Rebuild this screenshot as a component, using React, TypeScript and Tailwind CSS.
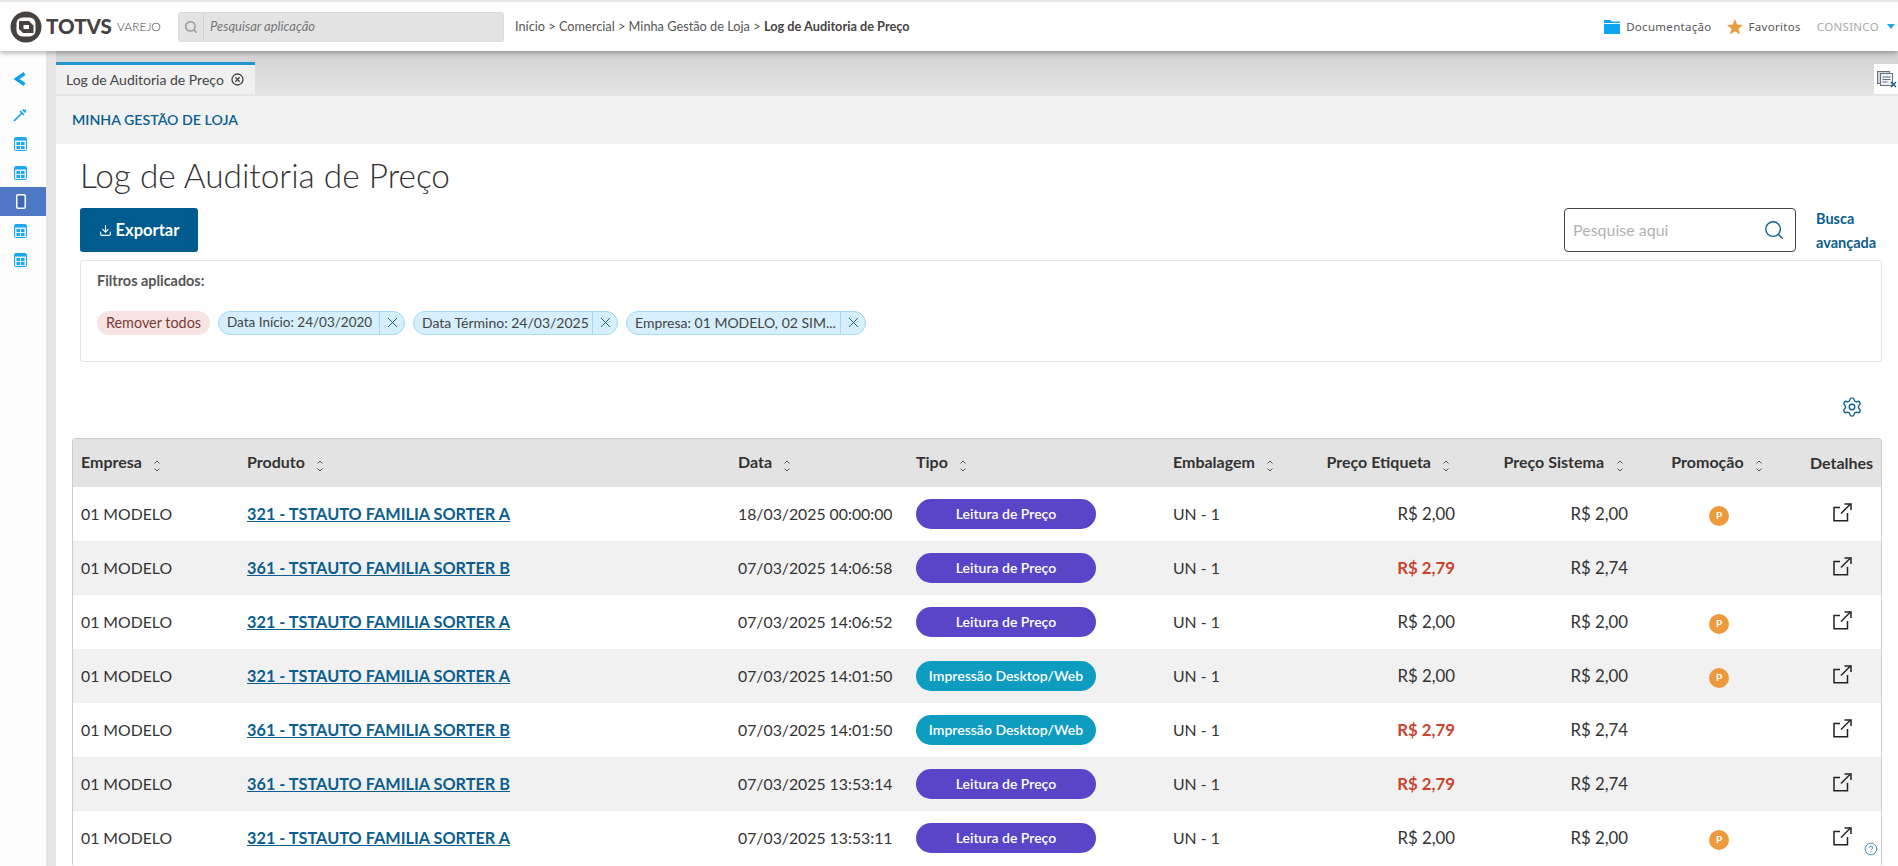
import { Search, Settings, Download, X, CircleHelp } from "lucide-react";

type Row = { p: string; d: string; t: "L" | "I"; pe: string; red?: boolean; ps: string; promo?: boolean };
const rows: Row[] = [
  { p: "321 - TSTAUTO FAMILIA SORTER A", d: "18/03/2025 00:00:00", t: "L", pe: "R$ 2,00", ps: "R$ 2,00", promo: true },
  { p: "361 - TSTAUTO FAMILIA SORTER B", d: "07/03/2025 14:06:58", t: "L", pe: "R$ 2,79", red: true, ps: "R$ 2,74" },
  { p: "321 - TSTAUTO FAMILIA SORTER A", d: "07/03/2025 14:06:52", t: "L", pe: "R$ 2,00", ps: "R$ 2,00", promo: true },
  { p: "321 - TSTAUTO FAMILIA SORTER A", d: "07/03/2025 14:01:50", t: "I", pe: "R$ 2,00", ps: "R$ 2,00", promo: true },
  { p: "361 - TSTAUTO FAMILIA SORTER B", d: "07/03/2025 14:01:50", t: "I", pe: "R$ 2,79", red: true, ps: "R$ 2,74" },
  { p: "361 - TSTAUTO FAMILIA SORTER B", d: "07/03/2025 13:53:14", t: "L", pe: "R$ 2,79", red: true, ps: "R$ 2,74" },
  { p: "321 - TSTAUTO FAMILIA SORTER A", d: "07/03/2025 13:53:11", t: "L", pe: "R$ 2,00", ps: "R$ 2,00", promo: true },
];

function Sort() {
  return (
    <svg width="8" height="14" viewBox="0 0 8 14" fill="none" stroke="#555" strokeWidth="1" className="inline-block shrink-0">
      <path d="M1.5 4.5L4 2l2.5 2.5M1.5 9.5L4 12l2.5-2.5" />
    </svg>
  );
}

function Ext() {
  return (
    <svg width="19" height="19" viewBox="0 0 19 19" fill="none" stroke="#222" strokeWidth="1.5" className="inline-block">
      <path d="M7 4.5H1v13.2h13.5V10" />
      <path d="M8 10.5L17.5 1" />
      <path d="M11.5 1h6.5v6" />
    </svg>
  );
}

function Cal() {
  return (
    <svg width="13" height="14" viewBox="0 0 13 14" className="mr-[6px]">
      <rect x="0.5" y="0.5" width="12" height="13" rx="1" fill="#dff1fc" stroke="#1ea7ef" />
      <rect x="1" y="1" width="11" height="2.5" fill="#1ea7ef" />
      <rect x="2.5" y="5" width="3.5" height="3" fill="#1ea7ef" />
      <rect x="7" y="5" width="3.5" height="3" fill="#1ea7ef" />
      <rect x="2.5" y="9" width="3.5" height="3" fill="#1ea7ef" />
      <rect x="7" y="9" width="3.5" height="3" fill="#1ea7ef" />
    </svg>
  );
}

function Chip({ label, w, size }: { label: string; w: string; size: string }) {
  return (
    <div className={`flex h-[24px] items-stretch rounded-[12px] border border-[#a5d9f5] bg-[#d5effd] text-[#444] ${size}`}>
      <span className={`${w} flex items-center whitespace-nowrap pl-[8px]`}>{label}</span>
      <span className="flex w-[25px] items-center justify-center border-l border-[#a5d9f5]">
        <X size={17} strokeWidth={1.3} color="#0b4f7a" />
      </span>
    </div>
  );
}

export default function App() {
  const th = "h-[48px] text-[16px] font-bold text-[#333] whitespace-nowrap";
  return (
    <div className="flex h-[866px] w-[1898px] flex-col overflow-hidden bg-white font-['Lato',sans-serif] text-[#333]">
      <header className="relative z-10 flex h-[51px] shrink-0 items-center border-t-2 border-[#e4e6ea] bg-white pl-[10px] pr-[3px] shadow-[0_2px_5px_rgba(0,0,0,0.3)]">
        <svg width="32" height="32" viewBox="0 0 32 32" className="shrink-0">
          <circle cx="16" cy="16" r="15.5" fill="#45423f" />
          <rect x="6.5" y="6.5" width="19" height="19" rx="6" fill="#fff" />
          <path d="M9 10h10l4.5 4.5V22H13l-4-4z" fill="#45423f" />
          <path d="M13.5 14h5.5v4h-5.5z" fill="#fff" />
        </svg>
        <span className="ml-[4px] w-[67px] text-[20.5px] font-black leading-none text-[#45423f]">TOTVS</span>
        <span className="ml-[4px] w-[41px] text-[12px] font-light text-[#45423f]">VAREJO</span>
        <div className="ml-[20px] flex h-[30px] w-[326px] items-center rounded-[3px] border border-[#dcdcdc] bg-[#e3e3e3]">
          <span className="flex h-full w-[25px] items-center justify-center border-r border-[#cfcfcf]">
            <Search size={14} strokeWidth={2.5} color="#999" />
          </span>
          <span className="pl-[6px] text-[13px] italic text-[#777]">Pesquisar aplicação</span>
        </div>
        <nav className="ml-[11px] text-[12.75px] text-[#555]">
          Início &gt; Comercial &gt; Minha Gestão de Loja &gt; <b className="text-[#444]">Log de Auditoria de Preço</b>
        </nav>
        <div className="ml-auto flex items-center font-['Noto_Sans',sans-serif] text-[11.5px] tracking-[0.3px] text-[#555]">
          <svg width="16" height="14" viewBox="0 0 16 14" fill="#0aa6f5">
            <path d="M0 0h6.5l1 1.5H16V3H0zM0 4h16v10H0z" />
          </svg>
          <span className="ml-[6px]">Documentação</span>
          <svg width="16" height="16" viewBox="0 0 16 16" fill="#ec9a3c" className="ml-[15px]">
            <path d="M8 0l2.1 5.6L16 6l-4.5 3.7L13 15.6 8 12.3l-5 3.3 1.5-5.9L0 6l5.9-.4z" />
          </svg>
          <span className="ml-[6px]">Favoritos</span>
          <span className="ml-[16px] text-[#aaa]">CONSINCO</span>
          <svg width="8" height="5" viewBox="0 0 8 5" fill="#1ea7ef" className="ml-[8px]">
            <path d="M0 0h8L4 5z" />
          </svg>
        </div>
      </header>

      <div className="relative flex min-h-0 flex-1">
        <aside className="flex w-[46px] shrink-0 flex-col items-center bg-[#fdfdfd] shadow-[1px_0_2px_rgba(0,0,0,0.05)]">
          <div className="mt-[17px] flex h-[22px] items-center">
            <svg width="14" height="14" viewBox="0 0 14 14" fill="none" stroke="#119ff0" strokeWidth="3.4" className="mr-[6px]">
              <path d="M11.5 1.5L3.5 7l8 5.5" />
            </svg>
          </div>
          <div className="mt-[17px] flex h-[16px] items-center">
            <svg width="14" height="14" viewBox="0 0 14 14" fill="none" stroke="#119ff0" strokeWidth="1.6" className="mr-[6px]">
              <path d="M1 13L9 5M7 3l4 4M9.5 1.5l3 3M11 3l2-1" />
            </svg>
          </div>
          <div className="mt-[13px] flex h-[16px] items-center"><Cal /></div>
          <div className="mt-[13px] flex h-[16px] items-center"><Cal /></div>
          <div className="mt-[6px] flex h-[29px] w-full items-center justify-center bg-[#4f78c4]">
            <svg width="10" height="15" viewBox="0 0 10 15" className="mr-[5px]">
              <rect x="0.75" y="0.75" width="8.5" height="13.5" rx="1.3" fill="#3e66b3" stroke="#fff" strokeWidth="1.5" />
            </svg>
          </div>
          <div className="mt-[7px] flex h-[16px] items-center"><Cal /></div>
          <div className="mt-[13px] flex h-[16px] items-center"><Cal /></div>
        </aside>
        <div className="flex min-w-0 flex-1 flex-col bg-[#e6e6e6] pl-[10px]">
          <div className="flex h-[43px] shrink-0 items-end justify-between bg-gradient-to-b from-[#d2d2d2] to-[#e3e3e3]">
            <div className="flex h-[32px] w-[199px] items-center border-t-[3px] border-[#2196d3] bg-[#f0f0f0] pl-[10px] text-[14px] text-[#444]">
              Log de Auditoria de Preço
              <svg width="13" height="13" viewBox="0 0 13 13" fill="none" stroke="#444" strokeWidth="1.3" className="ml-[7px]">
                <circle cx="6.5" cy="6.5" r="5.5" />
                <path d="M4.3 4.3l4.4 4.4M8.7 4.3l-4.4 4.4" />
              </svg>
            </div>
            <div className="flex h-[30px] w-[24px] items-center justify-start bg-white pl-[2px]">
              <svg width="22" height="18" viewBox="0 0 22 18" fill="none" stroke="#66717c">
                <rect x="1.5" y="1.5" width="12" height="12" fill="#cfd8e0" />
                <rect x="4.5" y="3.5" width="12" height="12" fill="#eef2f5" />
                <path d="M6.5 7h8M6.5 9.5h8M6.5 12h5" />
                <path d="M15 12l5 5M20 12l-5 5" stroke="#14537f" strokeWidth="1.3" />
              </svg>
            </div>
          </div>
          <div className="mt-[2px] flex min-h-0 flex-1 flex-col bg-white">
            <div className="flex h-[48px] shrink-0 items-center bg-[#f1f1f1] pl-[16px] text-[14.2px] font-semibold text-[#0b5e8f]">
              MINHA GESTÃO DE LOJA
            </div>
            <div className="px-[16px]">
              <div className="pl-[8px]">
                <h1 className="mt-[11px] h-[40px] text-[33.4px] font-light leading-[40px] text-[#333]">Log de Auditoria de Preço</h1>
                <div className="mt-[13px] flex h-[44px] items-stretch">
                  <button className="flex w-[118px] items-center justify-center gap-[4px] rounded-[3px] bg-[#005b8e] text-[16.5px] font-bold text-white">
                    <Download size={13} strokeWidth={2} />
                    Exportar
                  </button>
                  <div className="ml-auto flex w-[232px] items-center rounded-[4px] border border-[#444] pl-[8px] pr-[10px]">
                    <input readOnly placeholder="Pesquise aqui" className="min-w-0 flex-1 bg-transparent text-[16px] outline-none placeholder:text-[#b2b2b2]" />
                    <Search size={22} strokeWidth={1.5} color="#0b5e8f" />
                  </div>
                  <div className="ml-[20px] mr-[16px] w-[50px] -translate-y-[1px] text-[14.5px] font-bold leading-[24px] text-[#0b5e8f]">
                    Busca avançada
                  </div>
                </div>
                <div className="mt-[8px] h-[102px] rounded-[3px] border border-[#e3e3e3] px-[16px]">
                  <div className="mt-[9px] text-[14.4px] font-bold text-[#555]">Filtros aplicados:</div>
                  <div className="mt-[19px] flex items-center gap-[8px]">
                    <span className="flex h-[24px] w-[113px] items-center justify-center rounded-[12px] bg-[#f7e3e1] text-[14.4px] text-[#7a3b38]">Remover todos</span>
                    <Chip label="Data Início: 24/03/2020" w="w-[160px]" size="text-[13.5px]" />
                    <Chip label="Data Término: 24/03/2025" w="w-[178px]" size="text-[14px]" />
                    <Chip label="Empresa: 01 MODELO, 02 SIM..." w="w-[213px]" size="text-[14px]" />
                  </div>
                </div>
                <div className="mt-[34px] flex h-[26px] justify-end pr-[19px]">
                  <Settings size={22} strokeWidth={1.5} color="#0b5e8f" />
                </div>
              </div>
              <div className="mt-[16px] overflow-hidden rounded-t-[4px] border-x border-t border-[#cdcdcd]">
                <table className="w-[1809px] table-fixed border-collapse text-[15.8px] text-[#333]">
                  <colgroup>
                    <col className="w-[166px]" />
                    <col className="w-[491px]" />
                    <col className="w-[178px]" />
                    <col className="w-[257px]" />
                    <col className="w-[153px]" />
                    <col className="w-[146px]" />
                    <col className="w-[173px]" />
                    <col className="w-[164px]" />
                    <col className="w-[81px]" />
                  </colgroup>
                  <thead className="bg-[#e3e3e3]">
                    <tr>
                      {["Empresa", "Produto", "Data", "Tipo", "Embalagem"].map((h) => (
                        <th key={h} className={`${th} pl-[8px] text-left`}>
                          {h}
                          <span className="ml-[11px] align-middle"><Sort /></span>
                        </th>
                      ))}
                      <th className={`${th} pr-[14px] text-right`}>Preço Etiqueta<span className="ml-[11px] align-middle"><Sort /></span></th>
                      <th className={`${th} pr-[13px] text-right`}>Preço Sistema<span className="ml-[12px] align-middle"><Sort /></span></th>
                      <th className={`${th} pr-[4px] text-center`}>Promoção<span className="ml-[11px] align-middle"><Sort /></span></th>
                      <th className={`${th} text-center`}>Detalhes</th>
                    </tr>
                  </thead>
                  <tbody>
                    {rows.map((r, i) => (
                      <tr key={i} className={`h-[54px] ${i % 2 ? "bg-[#f1f1f1]" : "bg-white"}`}>
                        <td className="pl-[8px]">01 MODELO</td>
                        <td className="pl-[8px]">
                          <span className="text-[16.3px] font-bold text-[#0b5e8f] underline">{r.p}</span>
                        </td>
                        <td className="pl-[8px]">{r.d}</td>
                        <td className="pl-[8px]">
                          <span className={`flex h-[30px] w-[180px] items-center justify-center rounded-[15px] pb-[1px] text-[14px] font-semibold text-white ${r.t === "L" ? "bg-[#5a44c8]" : "bg-[#0e9cc0]"}`}>
                            {r.t === "L" ? "Leitura de Preço" : "Impressão Desktop/Web"}
                          </span>
                        </td>
                        <td className="pl-[8px]">UN - 1</td>
                        <td className={`pr-[9px] text-right text-[16.8px] ${r.red ? "font-bold text-[#c8452f]" : ""}`}>{r.pe}</td>
                        <td className="pr-[9px] text-right text-[16.8px]">{r.ps}</td>
                        <td>
                          {r.promo && (
                            <span className="mx-auto mt-[3px] flex h-[20px] w-[20px] items-center justify-center rounded-full bg-[#ec9a3c] text-[10px] font-bold text-white">P</span>
                          )}
                        </td>
                        <td className="pb-[8px] pl-[2px] text-center"><Ext /></td>
                      </tr>
                    ))}
                  </tbody>
                </table>
              </div>
            </div>
          </div>
        </div>
        <CircleHelp size={14} strokeWidth={1.5} color="#2f7fb0" className="absolute right-[20px] bottom-[10px]" />
      </div>
    </div>
  );
}
